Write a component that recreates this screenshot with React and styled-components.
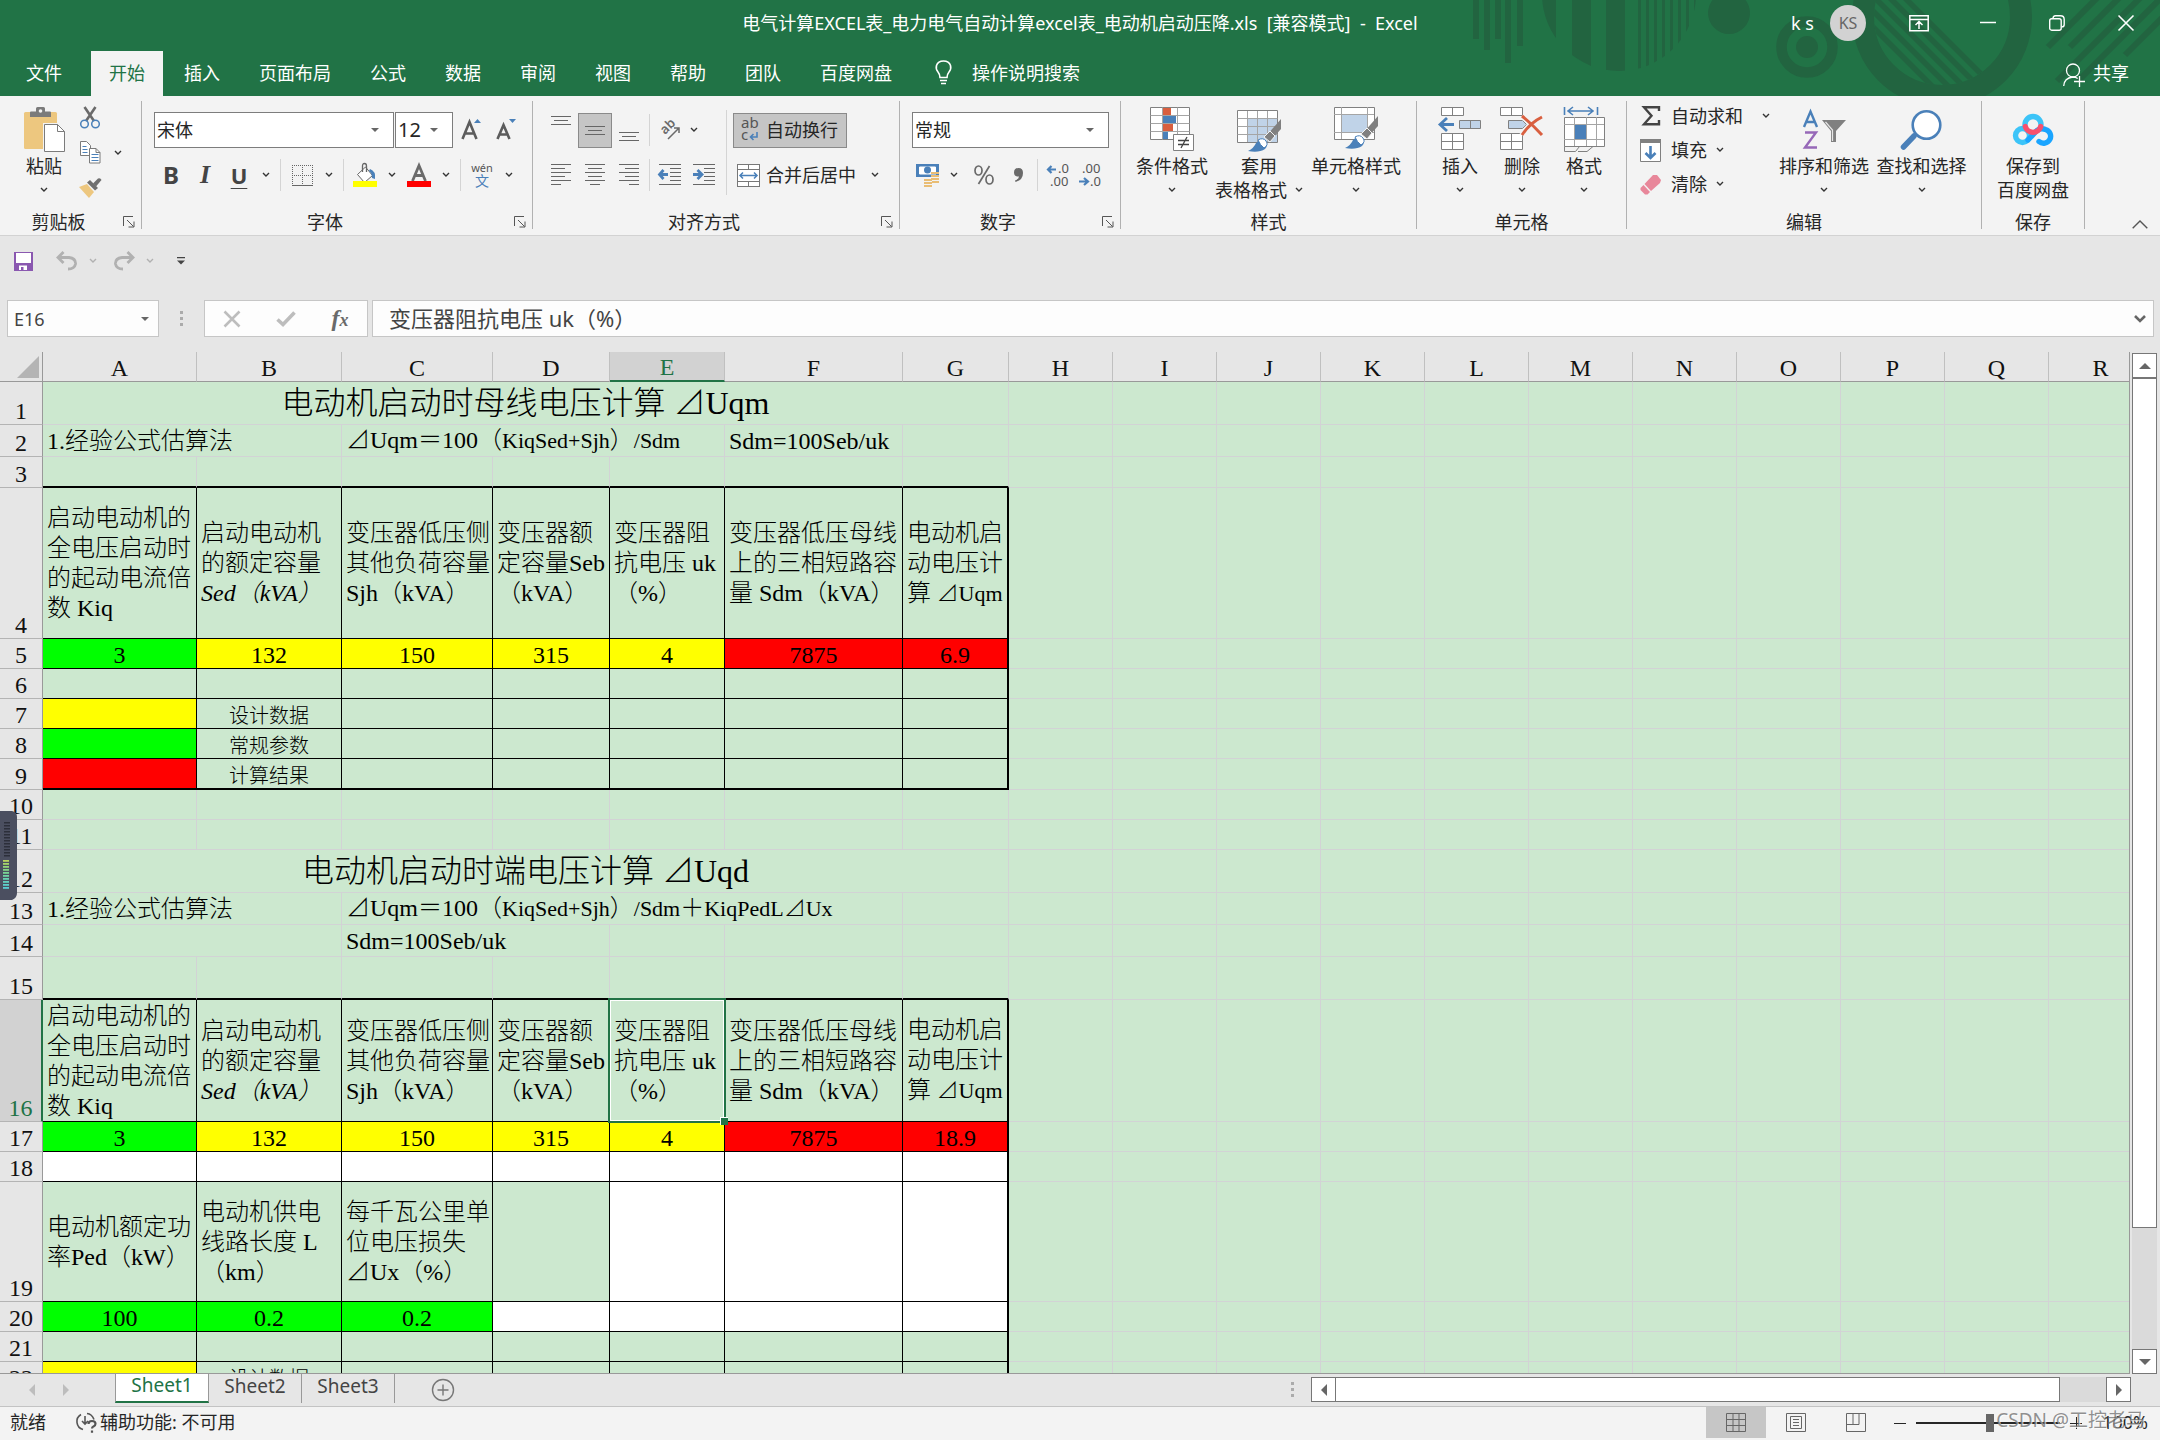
import React from "react";
import styled, { createGlobalStyle, css } from "styled-components";

const UI = `"Noto Sans", "Noto Sans CJK SC", sans-serif`;
const SONG = `"Liberation Serif", "Noto Sans CJK SC", serif`;
const GREEN = "#217346";
const PALE = "#cce8cf";
const YELLOW = "#ffff00";
const LIME = "#00ff00";
const RED = "#ff0000";
const WHITE = "#ffffff";
const BLUE = "#4a80b9";
const GREY = "#6a6a6a";

const Global = createGlobalStyle`
  *, *::before, *::after { box-sizing: border-box; }
  html, body { margin: 0; overflow: hidden; }
  body { font-family: ${UI}; font-size: 18px; line-height: 24px; color: #262626; background: #e6e6e6; }
  button, input, select { font: inherit; color: inherit; margin: 0; }
  svg { display: block; flex: none; overflow: visible; }
`;

const Window = styled.div`
  position: relative;
  display: flex;
  flex-direction: column;
  height: 100vh;
`;

/* ---------- title bar and tabs ---------- */

const Banner = styled.header`
  position: relative;
  flex: none;
  color: #fff;
  background: ${GREEN};
`;

const Pattern = styled.svg`
  position: absolute;
  top: 0;
  right: 0;
  overflow: hidden;
`;

const TitleRow = styled.div`
  position: relative;
  display: grid;
  grid-template-columns: 1fr auto 1fr;
  align-items: center;
  height: 51px;
  padding-bottom: 5px;
`;

const FileTitle = styled.h1`
  grid-column: 2;
  margin: 0;
  font-size: 18px;
  font-weight: 400;
  white-space: pre;
`;

const WindowTools = styled.div`
  display: flex;
  align-items: center;
  justify-content: flex-end;
`;

const Avatar = styled.span`
  width: 36px;
  height: 36px;
  margin: 0 18px 0 16px;
  border-radius: 50%;
  background: #d2d2d2;
  color: #666;
  font-size: 16px;
  line-height: 36px;
  text-align: center;
`;

const WindowButton = styled.button`
  display: flex;
  align-items: center;
  justify-content: center;
  width: 69px;
  height: 46px;
  padding: 0;
  border: 0;
  background: none;
`;

const TabRow = styled.nav`
  position: relative;
  display: flex;
  gap: 3px;
  height: 45px;
`;

const Tab = styled.button`
  display: flex;
  align-items: center;
  gap: 20px;
  padding: 0 ${(p) => p.$pad || 18}px 2px;
  border: 0;
  white-space: nowrap;
  background: ${(p) => (p.$active ? "#f3f3f3" : "none")};
  color: ${(p) => (p.$active ? GREEN : "#fff")};
`;

const ShareTab = styled(Tab)`
  gap: 8px;
  margin-left: auto;
  padding: 0 31px 2px 18px;
`;

/* ---------- ribbon ---------- */

const Ribbon = styled.section`
  display: flex;
  flex: none;
  height: 140px;
  background: #f3f3f3;
  border-bottom: 1px solid #d2d2d2;
`;

const GroupBox = styled.div`
  display: grid;
  grid-template-rows: 1fr 26px;
  flex: none;
  width: ${(p) => p.$w}px;
`;

const GroupBody = styled.div`
  display: flex;
  padding-left: ${(p) => p.$pad || 0}px;
`;

const GroupFooter = styled.div`
  display: grid;
  grid-template-columns: ${(p) => (p.$launcher ? "1fr 24px" : "1fr")};
  align-items: center;
  text-align: center;
`;

const Launcher = styled.button`
  display: flex;
  justify-content: center;
  padding: 0;
  border: 0;
  background: none;
`;

const Separator = styled.div`
  flex: none;
  width: 1px;
  margin: 5px 0 6px;
  background: #b1b1b1;
`;

const LongRule = styled.div`
  flex: none;
  width: 1px;
  height: 85px;
  margin: 14px 6px 0 5px;
  background: #d4d4d4;
`;

const Rule = styled.div`
  flex: none;
  width: 1px;
  height: 32px;
  margin: 0 ${(p) => p.$gap || 4}px;
  background: #d4d4d4;
`;

const Rows = styled.div`
  display: flex;
  flex-direction: column;
  gap: 9px;
  padding-top: 16px;
`;

const Line = styled.div`
  display: flex;
  align-items: center;
  gap: ${(p) => p.$gap || 0}px;
  height: 36px;
`;

const Tool = styled.button`
  display: flex;
  align-items: center;
  justify-content: center;
  flex: none;
  width: ${(p) => p.$w || 34}px;
  height: 35px;
  padding: 0;
  border: 1px solid ${(p) => (p.$on ? "#8a8a8a" : "transparent")};
  background: ${(p) => (p.$on ? "#c5c5c5" : "none")};
`;

const Glyph = styled.span`
  font-size: 24px;
  font-weight: 700;
  line-height: 28px;
  color: #444;
  ${(p) => p.$italic && css`font-family: "Liberation Serif", serif; font-style: italic; font-size: 26px;`}
  ${(p) => p.$under && css`font-size: 22px; text-decoration: underline; text-decoration-thickness: 1px; text-underline-offset: 4px;`}
`;

const LabelTool = styled.button`
  display: flex;
  align-items: center;
  gap: 6px;
  height: 35px;
  padding: 0 8px 0 3px;
  white-space: nowrap;
  border: 1px solid ${(p) => (p.$on ? "#8a8a8a" : "transparent")};
  background: ${(p) => (p.$on ? "#c5c5c5" : "none")};
`;

const SelectBox = styled.div`
  display: grid;
  grid-template-columns: 1fr 22px;
  align-items: center;
  width: ${(p) => p.$w}px;
  height: 36px;
  border: 1px solid #7d7d7d;
  background: #fff;
`;

const Select = styled.select`
  height: 34px;
  padding: 0 0 1px 2px;
  border: 0;
  background: none;
  appearance: none;
  min-width: 0;
  font-size: ${(p) => p.$size || 18}px;
`;

const Clip = styled.div`
  display: grid;
  grid-template-columns: 28px 20px;
  grid-auto-rows: 35px;
  align-content: start;
  align-items: center;
  padding-top: 4px;
`;

const BigBox = styled.button`
  display: flex;
  flex-direction: column;
  align-items: center;
  flex: none;
  width: ${(p) => p.$w}px;
  padding: 11px 0 0;
  border: 0;
  background: none;
  white-space: nowrap;
`;

const BigIcon = styled.span`
  display: flex;
  align-items: center;
  height: 45px;
  margin-bottom: 2px;
`;

const SecondLine = styled.span`
  display: flex;
  align-items: center;
  gap: 8px;
  height: 23px;
`;

const EditList = styled.div`
  width: 135px;
  padding-top: 4px;
`;

const EditItem = styled.button`
  display: grid;
  grid-template-columns: 22px auto auto;
  justify-content: start;
  align-items: center;
  column-gap: 9px;
  height: 34px;
  padding: 0 0 2px;
  border: 0;
  background: none;
  white-space: nowrap;
`;

const Push = styled.span`
  padding-left: ${(p) => p.$by || 0}px;
`;

const Collapse = styled.button`
  align-self: flex-end;
  margin-left: auto;
  padding: 6px 12px;
  border: 0;
  background: none;
`;

/* ---------- quick access and formula bar ---------- */

const QuickBar = styled.div`
  display: flex;
  align-items: center;
  flex: none;
  height: 50px;
  padding-left: 6px;
`;

const FormulaRow = styled.div`
  display: flex;
  flex: none;
  height: 66px;
  padding: 14px 6px 15px 7px;
`;

const Box = styled.div`
  display: flex;
  align-items: center;
  height: 37px;
  border: 1px solid #c6c6c6;
  background: #fdfdfd;
  ${(p) => (p.$w ? css`flex: none; width: ${p.$w}px;` : css`flex: 1;`)}
`;

const NameInput = styled.input`
  flex: 1;
  min-width: 0;
  height: 34px;
  padding: 0 6px;
  border: 0;
  outline: 0;
  background: none;
  font-size: 18px;
  color: #444;
`;

const FormulaInput = styled(NameInput)`
  padding: 0 16px 4px;
  font-size: 22px;
`;

const Grip = styled.div`
  display: flex;
  align-items: center;
  justify-content: center;
  flex: none;
  width: ${(p) => p.$w}px;
`;

/* ---------- sheet ---------- */

const Work = styled.main`
  display: flex;
  flex: 1;
  min-height: 0;
`;

const SheetView = styled.div`
  flex: 1;
  min-width: 0;
  overflow: hidden;
  background: ${PALE};
  border-right: 1px solid #999;
  border-bottom: 1px solid #999;
`;

const Grid = styled.table`
  width: 2153px;
  table-layout: fixed;
  border-collapse: separate;
  border-spacing: 0;
  font-family: ${SONG};
  font-size: 24px;
  font-weight: 300;
  line-height: 28px;
  color: #000;
`;

const ColHead = styled.th`
  height: 30px;
  padding: 3px 0 0;
  font-weight: 400;
  line-height: 25px;
  background: ${(p) => (p.$on ? "#d2d2d2" : "#e6e6e6")};
  color: ${(p) => (p.$on ? GREEN : "#111")};
  border-right: 1px solid #c0c0c0;
  border-bottom: ${(p) => (p.$on ? `2px solid ${GREEN}` : "1px solid #999")};
`;

const Corner = styled(ColHead)`
  padding: 0 3px 3px 0;
  border-right-color: #999;
  vertical-align: bottom;
  svg { margin-left: auto; }
`;

const RowHead = styled.th`
  padding: 0;
  font-weight: 400;
  line-height: 26px;
  vertical-align: bottom;
  text-align: center;
  background: ${(p) => (p.$on ? "#d2d2d2" : "#e6e6e6")};
  color: ${(p) => (p.$on ? GREEN : "#111")};
  border-right: ${(p) => (p.$on ? `2px solid ${GREEN}` : "1px solid #999")};
  border-bottom: 1px solid #b4b4b4;
`;

const Cell = styled.td`
  position: relative;
  height: ${(p) => p.$h}px;
  padding: 0 0 0 ${(p) => (p.$center ? 0 : 4)}px;
  white-space: pre;
  text-align: ${(p) => (p.$center ? "center" : "left")};
  vertical-align: ${(p) => (p.$low ? "bottom" : "middle")};
  font-size: ${(p) => p.$size || 24}px;
  line-height: ${(p) => p.$lh || 28}px;
  background: ${(p) => p.$fill || PALE};
  border-right: ${(p) => (p.$thickRight ? "2px solid #000" : p.$ink ? "1px solid #000" : "1px solid #d2d3d5")};
  border-bottom: ${(p) => (p.$thickBottom ? "2px solid #000" : p.$ink ? "1px solid #000" : "1px solid #d2d3d5")};
`;

const Small = styled.span`
  font-size: 22px;
`;

const Selection = styled.span`
  position: absolute;
  z-index: 1;
  inset: -2px;
  border: 2px solid ${GREEN};
  box-shadow: inset 0 0 0 1px #fff;
  &::after {
    content: "";
    position: absolute;
    right: -4px;
    bottom: -4px;
    width: 8px;
    height: 8px;
    background: ${GREEN};
    border: 1px solid #fff;
    border-width: 1px 0 0 1px;
  }
`;

const VScroll = styled.div`
  display: flex;
  flex-direction: column;
  flex: none;
  width: 25px;
  margin: 1px 3px 0 2px;
  background: #dadada;
`;

const ScrollButton = styled.button`
  display: flex;
  align-items: center;
  justify-content: center;
  flex: none;
  width: 25px;
  height: 25px;
  padding: 0;
  border: 1px solid #777;
  background: #fff;
`;

const VThumb = styled.div`
  height: 850px;
  border: 1px solid #777;
  background: #fff;
`;

const Spacer = styled.div`
  flex: 1;
`;

/* ---------- sheet tabs and status bar ---------- */

const SheetBar = styled.div`
  display: flex;
  flex: none;
  height: 33px;
  padding-right: 29px;
  border-bottom: 1px solid #c3c3c3;
`;

const SheetNav = styled.div`
  display: flex;
  align-items: center;
  width: 115px;
  padding-left: 15px;
`;

const SheetTab = styled.button`
  height: 29px;
  padding: 0 0 5px;
  width: ${(p) => (p.$active ? 94 : 93)}px;
  border: 0;
  font-size: 19px;
  line-height: 22px;
  color: ${(p) => (p.$active ? GREEN : "#444")};
  background: ${(p) => (p.$active ? "#fff" : "none")};
  ${(p) => (p.$active
    ? css`border-bottom: 2px solid ${GREEN}; border-left: 1px solid #999; border-right: 1px solid #999;`
    : css`border-right: 1px solid #999;`)}
`;

const AddSheet = styled.button`
  display: flex;
  align-items: center;
  padding: 0 0 0 36px;
  border: 0;
  background: none;
`;

const HScroll = styled.div`
  display: flex;
  flex: none;
  width: 820px;
  height: 25px;
  margin-top: 3px;
  background: #dadada;
`;

const HThumb = styled.div`
  flex: 1;
  margin-right: 46px;
  border: 1px solid #777;
  border-left: 0;
  background: #fff;
`;

const StatusBar = styled.footer`
  position: relative;
  display: flex;
  flex: none;
  align-items: stretch;
  height: 33px;
  padding-left: 10px;
  line-height: 30px;
  background: #f3f3f3;
`;

const Access = styled.span`
  display: flex;
  align-items: center;
  gap: 3px;
  height: 30px;
  margin: 0 auto 0 30px;
`;

const ViewButton = styled.button`
  display: flex;
  align-items: center;
  justify-content: center;
  width: 60px;
  height: 31px;
  padding: 0;
  border: 0;
  background: ${(p) => (p.$on ? "#c6c6c6" : "none")};
`;

const ZoomStep = styled.button`
  display: flex;
  align-items: center;
  width: 14px;
  height: 31px;
  padding: 0;
  border: 0;
  background: none;
`;

const Zoom = styled.input`
  width: 144px;
  height: 31px;
  margin: 0 10px 0 8px;
  appearance: none;
  background: linear-gradient(#262626, #262626) center / 100% 2px no-repeat;
  &::-webkit-slider-thumb {
    appearance: none;
    width: 8px;
    height: 18px;
    background: #666;
  }
`;

const Percent = styled.span`
  width: 76px;
  padding-right: 12px;
  text-align: right;
`;

const Watermark = styled.span`
  position: absolute;
  right: 15px;
  top: 0;
  font-size: 19px;
  line-height: 26px;
  color: rgba(110, 110, 110, 0.75);
  text-shadow: 1px 1px 0 rgba(255, 255, 255, 0.7);
`;

const Meter = styled.svg`
  position: absolute;
  left: 0;
  top: 811px;
`;

/* ---------- drawings ---------- */

const Chevron = ({ color = "#333" }) => (
  <svg width="8" height="6" viewBox="0 0 8 6" fill="none" stroke={color} strokeWidth="1.4"><path d="M1 1l3 3 3-3" /></svg>
);

const Triangle = ({ dir = "down", color = "#666", s = 8 }) => {
  const turn = { down: 0, left: 90, up: 180, right: 270 }[dir];
  return (
    <svg width={s} height={s} viewBox="0 0 8 8"><path d="M0 2h8L4 6z" fill={color} transform={`rotate(${turn} 4 4)`} /></svg>
  );
};

const Dots = () => (
  <svg width="3" height="16" viewBox="0 0 3 16" fill="#ababab"><path d="M0 0h3v3H0zM0 6h3v3H0zM0 12h3v3H0z" /></svg>
);

const HLines = ({ rows, w = 20, h = 22 }) => (
  <svg width={w} height={h} viewBox={`0 0 ${w} ${h}`} stroke="#666" shapeRendering="crispEdges">
    {rows.map(([y, a, b]) => <path key={y} d={`M${a} ${y + 0.5}H${b}`} />)}
  </svg>
);

const alignRows = (kind) => [0, 4, 8, 12, 16, 20].map((y, i) => {
  const short = i % 2 ? (i === 5 ? 10 : 14) : 20;
  const from = kind === "left" ? 0 : kind === "right" ? 20 - short : (20 - short) / 2;
  return [y, from, from + short];
});

const LauncherIcon = () => (
  <svg width="12" height="12" viewBox="0 0 12 12" fill="none" stroke="#555"><path d="M.5 10V.5H10M4 4l6.5 6.5M11 5.5V11H5.5" /></svg>
);

const PasteIcon = () => (
  <svg width="41" height="45" viewBox="0 0 41 45">
    <rect x="0" y="5" width="33" height="37" rx="1.5" fill="#edc77f" />
    <path d="M6 10V5.500q0-1 1-1h5V1.500Q12 0 13.500 0h6Q21 0 21 1.500v3h5q1 0 1 1V10z" fill="#7b7b7b" />
    <circle cx="16.500" cy="4" r="1.800" fill="#f3f3f3" />
    <path d="M19 16h15l8 8v21H19z" fill="#f3f3f3" />
    <path d="M20.500 17.500h13l7 7v20h-20z" fill="#fff" stroke="#7b7b7b" />
    <path d="M33.500 17.500v7h7" fill="none" stroke="#7b7b7b" />
  </svg>
);

const CutIcon = () => (
  <svg width="20" height="22" viewBox="0 0 20 22" fill="none">
    <path d="M4.500 0L14 14M15.500 0L6 14" stroke="#6a6a6a" strokeWidth="2.600" />
    <circle cx="4.500" cy="17" r="3.800" stroke={BLUE} strokeWidth="1.500" />
    <circle cx="15.500" cy="17" r="3.800" stroke={BLUE} strokeWidth="1.500" />
  </svg>
);

const CopyIcon = () => (
  <svg width="21" height="23" viewBox="0 0 21 23" fill="#fff" stroke="#7b7b7b">
    <path d="M.5.500h6l4 4v10H.500z" /><path d="M2.500 5.500h4M2.500 8.500h5M2.500 11.500h5" stroke={BLUE} />
    <path d="M9.500 7.500h6.500l4 4v10.500H9.500z" /><path d="M16 7.500v4h4" fill="none" /><path d="M11.500 13.500h7M11.500 16.500h7M11.500 19.500h7" stroke={BLUE} />
  </svg>
);

const PainterIcon = () => (
  <svg width="23" height="20" viewBox="0 0 23 20">
    <path d="M0 9l8-3 7 8-5 6z" fill="#edc77f" /><path d="M8 4.500l3-2.500 8 8-3 2.500z" fill="#6f6f6f" />
    <path d="M14 5.500l5-5q2.500-1 3.500 1.500L17 8.500z" fill="#6f6f6f" />
  </svg>
);

const GrowIcon = ({ down }) => (
  <svg width="20" height="22" viewBox="0 0 20 22">
    <path d={down ? "M1.500 20L7.500 6l6 14M3.800 15.500h7.500" : "M1.500 20L8.500 3l7 17M4 14.500h9"} fill="none" stroke="#5c5c5c" strokeWidth="2.600" />
    <path d={down ? "M13 0h7l-3.500 4z" : "M13 4h7l-3.500-4z"} fill={BLUE} />
  </svg>
);

const BorderIcon = () => (
  <svg width="21" height="21" viewBox="0 0 21 21" fill="none" stroke="#666" shapeRendering="crispEdges">
    <path d="M.5 0v20M10.500 0v20M20.500 0v20M0 .500h21M0 10.500h21" strokeDasharray="1 1" /><path d="M0 20.500h21" />
  </svg>
);

const FillIcon = () => (
  <svg width="24" height="24" viewBox="0 0 24 24">
    <path d="M4.500 11.500l8-7.500 7 8.500-8 7z" fill="#fff" stroke="#666" />
    <path d="M9.500 9V3q0-2.500 2-2.500t2 2.500v6" fill="none" stroke="#666" strokeWidth="1.300" />
    <path d="M17 6q6 2 5 10l-3-1q0-5-3-7z" fill={BLUE} />
    <rect y="18" width="24" height="6" fill="#ff0" />
  </svg>
);

const FontColorIcon = () => (
  <svg width="24" height="23" viewBox="0 0 24 23">
    <path d="M5.500 17L12 1.500 18.500 17M8 11.500h8" fill="none" stroke={GREY} strokeWidth="2.800" />
    <rect y="17" width="24" height="6" fill="red" />
  </svg>
);

const WenBox = styled.span`
  display: flex;
  flex-direction: column;
  align-items: center;
  font-size: 11px;
  line-height: 12px;
  color: #555;
  b { font-size: 14px; line-height: 14px; font-weight: 400; color: ${BLUE}; }
`;

const OrientIcon = () => (
  <svg width="22" height="22" viewBox="0 0 22 22">
    <text x="0" y="0" transform="translate(6 16) rotate(-45)" fontSize="13" fontFamily="Noto Sans, sans-serif" fontWeight="600" fill={GREY}>ab</text>
    <path d="M9 20L20 9M15 9h5v5" fill="none" stroke={GREY} strokeWidth="1.500" />
  </svg>
);

const IndentIcon = ({ right }) => (
  <svg width="22" height="22" viewBox="0 0 22 22" fill="none">
    <path d="M0 .500h22M11 4.500h11M11 8.500h11M11 12.500h11M11 16.500h11M0 20.500h22" stroke="#666" shapeRendering="crispEdges" />
    <path d={right ? "M0 10.500h8M4.500 6l4.500 4.500L4.500 15" : "M9 10.500H1M4.500 6L0.500 10.500 4.500 15"} stroke={BLUE} strokeWidth="2.800" />
  </svg>
);

const WrapIcon = () => (
  <svg width="23" height="24" viewBox="0 0 23 24" fontFamily="Noto Sans, sans-serif" fontSize="15" fill="#555">
    <text x="4" y="10">ab</text><text x="4" y="22">c</text>
    <path d="M20 14v5h-6M16.500 16l-3 3 3 3" fill="none" stroke={BLUE} strokeWidth="1.600" />
  </svg>
);

const MergeIcon = () => (
  <svg width="23" height="23" viewBox="0 0 23 23" fill="none">
    <path d="M.5.500h22v22H.500zM.500 5.500h22M.500 17.500h22M11.500 0v5M11.500 18v5" fill="#fff" stroke="#777" shapeRendering="crispEdges" />
    <path d="M3 11.500h17M6 8.500l-3 3 3 3M17 8.500l3 3-3 3" stroke={BLUE} strokeWidth="1.500" />
  </svg>
);

const MoneyIcon = () => (
  <svg width="24" height="23" viewBox="0 0 24 23">
    <rect width="23" height="13" fill={BLUE} /><path d="M3 2.500h17v8H3z" fill="#fff" /><path d="M1 1h4L1 5zM22 1v4l-4-4zM1 12V8l4 4z" fill={BLUE} /><circle cx="11.500" cy="6" r="3.500" fill={BLUE} />
    <g stroke="#e9bd74" strokeWidth="2"><path d="M15 9h8M15 12h8M15 15h8M8 16h8M8 19h8M8 22h8M16 18h7" /></g>
  </svg>
);

const DecimalIcon = ({ less }) => (
  <svg width="24" height="26" viewBox="0 0 24 26" fontFamily="Noto Sans, sans-serif" fontSize="13" fill="#555">
    <text x={less ? 3 : 11} y="11">{less ? ".00" : ".0"}</text>
    <text x={less ? 11 : 3} y="24">{less ? ".0" : ".00"}</text>
    <path d={less ? "M0 19.500h8M5 16l4 3.500L5 23" : "M9 7.500H1M4.500 4L1 7.500 4.500 11"} fill="none" stroke={BLUE} strokeWidth="2.200" />
  </svg>
);

const Brush = ({ x, y }) => (
  <g transform={`translate(${x} ${y})`}>
    <path d="M33 0v10L24 20l-5-4z" fill="#808080" /><path d="M22 12l5 5-5 6-6-5z" fill="#808080" stroke="#f3f3f3" />
    <path d="M0 32q6-3 8-8 4-5 9-2 4 4 0 8-6 4-17 2z" fill={BLUE} /><path d="M10 21q5-3 8 1t-2 7q-4-3-6-8z" fill="#fff" stroke={BLUE} />
  </g>
);

const CondIcon = () => (
  <svg width="45" height="45" viewBox="0 0 45 45">
    <path d="M.5.500h39v32H.500z" fill="#fff" stroke="#808080" />
    <path d="M.5 8.500h39M.5 16.500h39M.5 24.500h39M12.500.500v32M27.500.500v32" stroke="#a5a5a5" fill="none" />
    <path d="M13 1h8v7h-8zM13 17h10v7H13z" fill="#d95f3f" /><path d="M13 9h13v7H13zM13 25h5v7h-5z" fill={BLUE} />
    <path d="M23.500 27.500h20v16h-20z" fill="#fff" stroke="#808080" /><path d="M28 33.500h11M28 37.500h11M37 30l-6 11" stroke="#444" fill="none" strokeWidth="1.300" />
  </svg>
);

const TableIcon = () => (
  <svg width="45" height="45" viewBox="0 0 45 45">
    <path d="M.5 3.500h40v32H.500z" fill="#fff" stroke="#808080" /><path d="M11 12h29v23H11z" fill="#c0d3e8" />
    <path d="M.5 11.500h40M.5 19.500h40M.5 27.500h40M10.500 4v31M20.500 4v31M30.500 4v31" stroke="#a5a5a5" fill="none" />
    <Brush x={11} y={12} />
  </svg>
);

const StyleIcon = () => (
  <svg width="45" height="45" viewBox="0 0 45 45">
    <path d="M.5.500h40v32H.500z" fill="#fff" stroke="#808080" /><path d="M0 7.500h40M0 25.500h40M7.500 0v32M33.500 0v32" stroke="#a5a5a5" />
    <path d="M8 8h25v17H8z" fill="#c0d3e8" /><Brush x={11} y={9} />
  </svg>
);

const InsertIcon = () => (
  <svg width="44" height="45" viewBox="0 0 44 45" fill="none" stroke="#808080">
    <path d="M3.500.500h22v8h-22zM14.500.500v8M3.500 26.500h22v16h-22zM14.500 26.500v16M3.500 34.500h22" fill="#fff" />
    <path d="M21.500 13.500h21v8h-21z" fill="#c0d3e8" /><path d="M32.500 13.500v8" />
    <path d="M16 17.500H2M9 11l-7 6.500L9 24" stroke={BLUE} strokeWidth="2.800" />
  </svg>
);

const DeleteIcon = () => (
  <svg width="44" height="45" viewBox="0 0 44 45" fill="none" stroke="#808080">
    <path d="M.5.500h22v8H.500zM11.500.500v8M.500 26.500h22v16H.500zM11.500 26.500v16M.500 34.500h22" fill="#fff" />
    <path d="M8.500 13.500h14l4 4-4 4h-14z" fill="#c0d3e8" />
    <path d="M22 9q10 8 20 19M42 10q-12 6-20 18" stroke="#f3f3f3" strokeWidth="6" />
    <path d="M22 9q10 8 20 19M42 10q-12 6-20 18" stroke="#d95f3f" strokeWidth="3" />
  </svg>
);

const FormatIcon = () => (
  <svg width="41" height="45" viewBox="0 0 41 45" fill="none">
    <path d="M.5 0v8M33.500 0v8M4 4h25M9 0L4 4l5 4M24 0l5 4-5 4" stroke={BLUE} strokeWidth="1.600" />
    <path d="M.5 10.500h40v29H.500z" fill="#fff" stroke="#808080" /><path d="M0 17.500h40M0 32.500h40M10.500 10v29M22.500 10v29M32.500 10v29" stroke="#a5a5a5" />
    <path d="M11 18h11v14H11z" fill={BLUE} /><path d="M.5 39.500v5h11l4-5M14 44.500h9l6-5" stroke="#808080" />
  </svg>
);

const SigmaIcon = () => (
  <svg width="20" height="20" viewBox="0 0 20 20"><path d="M19 5V1.300H4L11.500 9.700 4 18.200h15V14" fill="none" stroke="#444" strokeWidth="2.400" /></svg>
);

const FillDownIcon = () => (
  <svg width="21" height="23" viewBox="0 0 21 23"><path d="M.5.500h20v22H.500z" fill="#fff" stroke="#808080" /><path d="M0 0h21v4H0z" fill="#808080" /><path d="M10.500 7v12M5.500 14l5 5 5-5" fill="none" stroke={BLUE} strokeWidth="2.600" /></svg>
);

const EraserIcon = () => (
  <svg width="21" height="21" viewBox="0 0 21 21"><path d="M13 1h4l4 5-1 3-9 8-6.500-7z" fill="#e8879a" /><path d="M3.500 11l6.500 7L7.500 20.500H5L.500 16v-2z" fill="#e8879a" /></svg>
);

const SortIcon = () => (
  <svg width="43" height="40" viewBox="0 0 43 40" fill="none">
    <path d="M1 17L7.500 1.500 14 17M3.500 12h8" stroke={BLUE} strokeWidth="2.400" />
    <path d="M2 22.500h11L2 37.500h12" stroke="#9668b8" strokeWidth="2.400" />
    <path d="M19 10h24L33 21v11h-5V21z" fill="#808080" /><path d="M22.500 12l7 8v11" stroke="#e6e6e6" strokeWidth="1.200" />
  </svg>
);

const FindIcon = () => (
  <svg width="41" height="40" viewBox="0 0 41 40"><path d="M13 26L2.500 37" stroke={BLUE} strokeWidth="5.500" strokeLinecap="round" /><circle cx="25.500" cy="15" r="13.800" fill="#fff" stroke={BLUE} strokeWidth="2.600" /></svg>
);

const PanIcon = () => (
  <svg width="40" height="32" viewBox="0 0 40 32" fill="none" strokeWidth="5.400" strokeLinecap="round">
    <circle cx="9.500" cy="21.500" r="7" stroke="#3cc4f8" />
    <path d="M15 26l9-9.500q4-3 8.500-1a7 7 0 1 1-6.500 12" stroke="#1aa5ff" />
    <path d="M12 10.500a8 8 0 0 1 16 0" stroke="#3cc4f8" />
    <path d="M12.300 12.500a8 8 0 0 0 15.400 0" stroke="#f9506e" />
  </svg>
);

const BannerPattern = () => (
  <Pattern width="700" height="96" viewBox="1460 0 700 96" fill="#226440">
    <defs>
      <clipPath id="bars"><circle cx="1619" cy="-6" r="77" /></clipPath>
      <clipPath id="disc"><circle cx="1942" cy="17" r="68" /></clipPath>
    </defs>
    <path d="M1473 0h6v39h-6zM1484 0h6v50h-6zM1495 0h6v39h-6zM1505 0h6v63h-6zM1517 0h6v46h-6z" />
    <g clipPath="url(#bars)">
      <path d="M1540 0h16v80h-16zM1572 0h19v80h-19zM1606 0h19v80h-19z" />
      {[1638, 1646, 1654, 1662, 1670, 1678, 1686, 1694].map((x) => <path key={x} d={`M${x} 0h3v80h-3z`} />)}
    </g>
    <circle cx="1729" cy="13" r="21" />
    <circle cx="1807" cy="47" r="11" />
    <g fill="none" stroke="#226440">
      <circle cx="1807" cy="47" r="25.500" strokeWidth="10.500" />
      <circle cx="1942" cy="17" r="79" strokeWidth="22" />
      <path clipPath="url(#disc)" strokeWidth="5.500" d="M1841 -5l110 110M1857 -5l110 110M1872 -5l110 110M1887 -5l110 110M1902 -5l110 110" />
      <path strokeWidth="6" d="M2100 -5l-52 52M2122 -5l-52 52M2143 -5l-86 86M2164 -5l-86 86M2185 -5l-60 60" />
    </g>
  </Pattern>
);

const BulbIcon = () => (
  <svg width="17" height="25" viewBox="0 0 17 25" fill="none" stroke="#fff" strokeWidth="1.600">
    <path d="M5 17.500q0-3-2-5.500-2.500-3-1.500-6.500Q3 1 8.500 1T15.500 5.500q1 3.500-1.500 6.500-2 2.500-2 5.500zM5 20.500h7M6 23.500h5" />
  </svg>
);

const ShareIcon = () => (
  <svg width="22" height="24" viewBox="0 -2 22 24" fill="none" stroke="#fff" strokeWidth="1.300"><circle cx="10" cy="7.500" r="6.500" /><path d="M.7 23q.5-8 9-9 3 0 5 1.500M16.500 13v11M11 18.500h11" /></svg>
);

const RibbonModeIcon = () => (
  <svg width="20" height="17" viewBox="0 0 20 17" fill="none" stroke="#fff" strokeWidth="1.500"><path d="M.8.800h18.400v15H.800zM.8 4.500h18.400M10 14V7M6.500 10L10 6.500l3.500 3.500" /></svg>
);
const MinIcon = () => <svg width="16" height="16" viewBox="0 0 16 16" stroke="#fff" strokeWidth="1.500"><path d="M0 7.500h16" /></svg>;
const RestoreIcon = () => (
  <svg width="16" height="16" viewBox="0 0 16 16" fill="none" stroke="#fff" strokeWidth="1.400"><rect x=".7" y="3.700" width="11.500" height="11.500" rx="2" /><path d="M4 3.500q0-2.800 2.500-2.800h5q3.700 0 3.700 3.700v5q0 2.500-2.500 2.500" /></svg>
);
const CloseIcon = () => <svg width="16" height="16" viewBox="0 0 16 16" stroke="#fff" strokeWidth="1.600"><path d="M.5.500l15 15M15.500.500l-15 15" /></svg>;

const SaveIcon = () => (
  <svg width="19" height="19" viewBox="0 0 19 19"><path d="M0 0h19v19H0z" fill="#8a58b0" /><path d="M2 1h15v10H2z" fill="#fff" /><path d="M5 13.500h8V18H5z" fill="#fff" /><path d="M7 15h2.500v3H7z" fill="#8a58b0" /></svg>
);
const UndoIcon = ({ flip }) => (
  <svg width="22" height="20" viewBox="0 0 22 20" fill="none" stroke="#b1b1b1" strokeWidth="2.800">
    <g transform={flip ? "translate(22 0) scale(-1 1)" : undefined}><path d="M2 6.500h11q7 1 6.500 6.500-1 5-7.500 5M7.500 1L2 6.500 7.500 12" /></g>
  </svg>
);
const MoreIcon = () => <svg width="8" height="8" viewBox="0 0 8 8" fill="#444"><path d="M0 0h8v1.300H0zM0 3.500h8L4 7.500z" /></svg>;
const CrossIcon = () => <svg width="18" height="16" viewBox="0 0 18 16" stroke="#bdbdbd" strokeWidth="2.600"><path d="M1.500.500l15 15M16.500.500l-15 15" /></svg>;
const TickIcon = () => <svg width="20" height="16" viewBox="0 0 20 16" fill="none" stroke="#bdbdbd" strokeWidth="3.600"><path d="M1.500 8.500l5.500 5L18.500 1.500" /></svg>;

const Fx = styled.i`
  font-family: "Liberation Serif", serif;
  font-size: 24px;
  font-weight: 700;
  color: #6a6a6a;
  small { font-size: 18px; }
`;

const AccessIcon = () => (
  <svg width="21" height="21" viewBox="0 0 21 21" fill="none" stroke="#555" strokeWidth="1.600">
    <path d="M5 2.500A8.200 8.200 0 0 0 7 17.500M11 1.500q5 .500 7 6M9 4v8M6 9l3 3 3-3" /><path d="M12.500 12q0-3 3.500-3t3.500 2.800q0 1.700-2 2.600-1.500.800-1.500 2.200M16 18.500v2.200" strokeWidth="2.200" />
  </svg>
);

const ViewIcon = ({ d }) => (
  <svg width="20" height="19" viewBox="0 0 20 19" fill="none" stroke="#666"><path d={d} /></svg>
);

/* ---------- composed parts ---------- */

const Group = ({ w, title, pad, launcher, children }) => (
  <>
    <GroupBox $w={w}>
      <GroupBody $pad={pad}>{children}</GroupBody>
      <GroupFooter $launcher={launcher}>
        <span>{title}</span>
        {launcher && <Launcher aria-label={title}><LauncherIcon /></Launcher>}
      </GroupFooter>
    </GroupBox>
    <Separator />
  </>
);

const Big = ({ w, icon, label, second, drop = true }) => (
  <BigBox $w={w}>
    <BigIcon>{icon}</BigIcon>
    <span>{label}</span>
    <SecondLine>{second}{drop && <Chevron />}</SecondLine>
  </BigBox>
);

const Drop = ({ w = 20, label }) => <Tool $w={w} aria-label={label}><Chevron /></Tool>;

const Pick = ({ w, value, label, size }) => (
  <SelectBox $w={w}>
    <Select aria-label={label} defaultValue={value} $size={size}><option>{value}</option></Select>
    <Triangle />
  </SelectBox>
);

const COLS = [
  ["A", 154], ["B", 145], ["C", 151], ["D", 117], ["E", 115], ["F", 178], ["G", 106],
  ..."HIJKLMNOPQR".split("").map((c) => [c, 104]),
];

const num = (t, fill) => ({ t, fill, center: true, low: true, lh: 26 });
const head = (t, more) => ({ t, lh: 30, ...more });
const blank = (n, fill) => Array.from({ length: n }, () => ({ t: "", fill }));
const legend = (fill, t) => [{ t: "", fill }, { t, center: true, low: true, size: 20, lh: 24 }, ...blank(5)];

const HEADINGS = (selected) => [
  head("启动电动机的\n全电压启动时\n的起动电流倍\n数 Kiq"),
  head(<>启动电动机{"\n"}的额定容量{"\n"}<i>Sed（kVA）</i></>),
  head("变压器低压侧\n其他负荷容量\nSjh（kVA）"),
  head("变压器额\n定容量Seb\n（kVA）"),
  head(<>变压器阻{"\n"}抗电压 uk{"\n"}（%）{selected && <Selection />}</>),
  head("变压器低压母线\n上的三相短路容\n量 Sdm（kVA）"),
  head(<>电动机启{"\n"}动电压计{"\n"}算<Small> ⊿Uqm</Small></>),
];

const values = (last) => [
  num("3", LIME), num("132", YELLOW), num("150", YELLOW), num("315", YELLOW), num("4", YELLOW), num("7875", RED), num(last, RED),
];

const FORMULA = <>⊿Uqm＝100（<Small>KiqSed+Sjh</Small>）<Small>/Sdm</Small></>;

const ROWS = [
  { h: 43, cells: [{ t: "电动机启动时母线电压计算 ⊿Uqm", span: 7, center: true, size: 32, lh: 40 }] },
  { h: 32, cells: [{ t: "1.经验公式估算法", span: 2 }, { t: FORMULA, span: 3 }, { t: "Sdm=100Seb/uk" }, { t: "" }] },
  { h: 31, thick: true, cells: blank(7) },
  { h: 151, ink: true, cells: HEADINGS(false) },
  { h: 30, ink: true, cells: values("6.9") },
  { h: 30, ink: true, cells: blank(7) },
  { h: 30, ink: true, cells: legend(YELLOW, "设计数据") },
  { h: 30, ink: true, cells: legend(LIME, "常规参数") },
  { h: 31, ink: true, thick: true, cells: legend(RED, "计算结果") },
  { h: 30, cells: blank(7) },
  { h: 30, cells: blank(7) },
  { h: 43, cells: [{ t: "电动机启动时端电压计算 ⊿Uqd", span: 7, center: true, size: 32, lh: 40 }] },
  { h: 32, cells: [{ t: "1.经验公式估算法", span: 2 }, { t: <>{FORMULA}＋<Small>KiqPedL⊿Ux</Small></>, span: 4 }, { t: "" }] },
  { h: 32, cells: [{ t: "", span: 2 }, { t: "Sdm=100Seb/uk", span: 2 }, ...blank(3)] },
  { h: 43, thick: true, cells: blank(7) },
  { h: 122, ink: true, on: true, cells: HEADINGS(true) },
  { h: 30, ink: true, cells: values("18.9") },
  { h: 30, ink: true, cells: blank(7, WHITE) },
  {
    h: 120, ink: true, cells: [
      head("电动机额定功\n率Ped（kW）"), head("电动机供电\n线路长度 L\n（km）"), head("每千瓦公里单\n位电压损失\n⊿Ux（%）"),
      { t: "" }, ...blank(3, WHITE),
    ],
  },
  { h: 30, ink: true, cells: [num("100", LIME), num("0.2", LIME), num("0.2", LIME), ...blank(4, WHITE)] },
  { h: 30, ink: true, cells: blank(7) },
  { h: 30, ink: true, cells: legend(YELLOW, "设计数据") },
];

const Sheet = () => (
  <Grid>
    <colgroup>
      <col style={{ width: 43 }} />
      {COLS.map(([c, w]) => <col key={c} style={{ width: w }} />)}
    </colgroup>
    <thead>
      <tr>
        <Corner aria-label="全选"><svg width="22" height="22" viewBox="0 0 22 22"><path d="M22 0v22H0z" fill="#b4b4b4" /></svg></Corner>
        {COLS.map(([c]) => <ColHead key={c} scope="col" $on={c === "E"}>{c}</ColHead>)}
      </tr>
    </thead>
    <tbody>
      {ROWS.map((r, i) => (
        <tr key={i}>
          <RowHead scope="row" $on={r.on}>{i + 1}</RowHead>
          {r.cells.map((c, j) => (
            <Cell
              key={j} colSpan={c.span} $h={r.h} $ink={r.ink} $thickBottom={r.thick}
              $thickRight={r.ink && j === r.cells.length - 1}
              $fill={c.fill} $center={c.center} $low={c.low} $size={c.size} $lh={c.lh}
            >
              {c.t}
            </Cell>
          ))}
          {COLS.slice(7).map(([c]) => <Cell key={c} $h={r.h} />)}
        </tr>
      ))}
    </tbody>
  </Grid>
);

const TABS = ["插入", "页面布局", "公式", "数据", "审阅", "视图", "帮助", "团队", "百度网盘"];

export default function App() {
  return (
    <Window>
      <Global />
      <Banner>
        <BannerPattern />
        <TitleRow>
          <FileTitle>{"电气计算EXCEL表_电力电气自动计算excel表_电动机启动压降.xls  [兼容模式]  -  Excel"}</FileTitle>
          <WindowTools>
            <span>k s</span>
            <Avatar>KS</Avatar>
            <WindowButton aria-label="功能区显示选项"><RibbonModeIcon /></WindowButton>
            <WindowButton aria-label="最小化"><MinIcon /></WindowButton>
            <WindowButton aria-label="向下还原"><RestoreIcon /></WindowButton>
            <WindowButton aria-label="关闭"><CloseIcon /></WindowButton>
          </WindowTools>
        </TitleRow>
        <TabRow>
          <Tab $pad={26}>文件</Tab>
          <Tab $active>开始</Tab>
          {TABS.map((t) => <Tab key={t}>{t}</Tab>)}
          <Tab $pad={22}><BulbIcon />操作说明搜索</Tab>
          <ShareTab><ShareIcon />共享</ShareTab>
        </TabRow>
      </Banner>

      <Ribbon>
        <Group w={141} title="剪贴板" pad={8} launcher>
          <Big w={72} icon={<PasteIcon />} label="粘贴" />
          <Clip>
            <Tool $w={20} aria-label="剪切"><CutIcon /></Tool><span />
            <Tool $w={20} aria-label="复制"><CopyIcon /></Tool><Drop label="复制选项" />
            <Tool $w={20} aria-label="格式刷"><PainterIcon /></Tool>
          </Clip>
        </Group>
        <Group w={390} title="字体" pad={12} launcher>
          <Rows>
            <Line $gap={1}>
              <Pick w={240} value="宋体" label="字体" />
              <Pick w={58} value="12" label="字号" size={20} />
              <Tool aria-label="增大字号"><GrowIcon /></Tool>
              <Tool aria-label="减小字号"><GrowIcon down /></Tool>
            </Line>
            <Line>
              <Tool aria-label="加粗"><Glyph>B</Glyph></Tool>
              <Tool aria-label="倾斜"><Glyph $italic>I</Glyph></Tool>
              <Tool aria-label="下划线"><Glyph $under>U</Glyph></Tool>
              <Drop label="下划线样式" />
              <Rule />
              <Tool aria-label="边框"><BorderIcon /></Tool><Drop label="边框样式" />
              <Rule />
              <Tool aria-label="填充颜色"><FillIcon /></Tool><Drop label="填充颜色选项" />
              <Tool aria-label="字体颜色"><FontColorIcon /></Tool><Drop label="字体颜色选项" />
              <Rule />
              <Tool aria-label="拼音"><WenBox>wén<b>文</b></WenBox></Tool><Drop label="拼音选项" />
            </Line>
          </Rows>
        </Group>
        <Group w={366} title="对齐方式" pad={11} launcher>
          <Rows>
            <Line>
              <Tool aria-label="顶端对齐"><HLines rows={[[1, 0, 20], [5, 3, 17], [9, 0, 20]]} h={30} /></Tool>
              <Tool $on aria-label="垂直居中"><HLines rows={[[7, 0, 20], [11, 3, 17], [15, 0, 20]]} /></Tool>
              <Tool aria-label="底端对齐"><HLines rows={[[17, 0, 20], [21, 3, 17], [25, 0, 20]]} h={30} /></Tool>
              <Rule $gap={3} />
              <Tool aria-label="方向"><OrientIcon /></Tool><Drop w={14} label="方向选项" />
            </Line>
            <Line>
              <Tool aria-label="左对齐"><HLines rows={alignRows("left")} /></Tool>
              <Tool aria-label="居中"><HLines rows={alignRows("center")} /></Tool>
              <Tool aria-label="右对齐"><HLines rows={alignRows("right")} /></Tool>
              <Rule $gap={3} />
              <Tool aria-label="减少缩进量"><IndentIcon /></Tool>
              <Tool aria-label="增加缩进量"><IndentIcon right /></Tool>
            </Line>
          </Rows>
          <LongRule />
          <Rows>
            <Line><LabelTool $on><WrapIcon />自动换行</LabelTool></Line>
            <Line><LabelTool><MergeIcon />合并后居中</LabelTool><Drop label="合并选项" /></Line>
          </Rows>
        </Group>
        <Group w={220} title="数字" pad={12} launcher>
          <Rows>
            <Line><Pick w={197} value="常规" label="数字格式" /></Line>
            <Line>
              <Tool $w={32} aria-label="会计数字格式"><MoneyIcon /></Tool><Drop label="货币选项" />
              <Tool $w={40} aria-label="百分比样式">
                <svg width="20" height="20" viewBox="0 0 20 20" fill="none" stroke={GREY} strokeWidth="1.700"><ellipse cx="4.500" cy="5.500" rx="3.500" ry="4.500" /><ellipse cx="15.500" cy="14.500" rx="3.500" ry="4.500" /><path d="M15.500 1L4.500 19" /></svg>
              </Tool>
              <Tool $w={28} aria-label="千位分隔样式">
                <svg width="9" height="14" viewBox="0 0 9 14" fill={GREY}><path d="M4.500 0Q9 0 9 5q0 7-7.500 9l-.500-1.500Q5 11 5 8.500 0 9 0 4.500 0 0 4.500 0z" /></svg>
              </Tool>
              <Rule $gap={5} />
              <Tool $w={32} aria-label="增加小数位数"><DecimalIcon /></Tool>
              <Tool $w={32} aria-label="减少小数位数"><DecimalIcon less /></Tool>
            </Line>
          </Rows>
        </Group>
        <Group w={295} title="样式" pad={9}>
          <Big w={84} icon={<CondIcon />} label="条件格式" />
          <Big w={90} icon={<TableIcon />} label="套用" second="表格格式" />
          <Big w={104} icon={<StyleIcon />} label="单元格样式" />
        </Group>
        <Group w={209} title="单元格" pad={12}>
          <Big w={62} icon={<InsertIcon />} label="插入" />
          <Big w={62} icon={<DeleteIcon />} label="删除" />
          <Big w={62} icon={<FormatIcon />} label="格式" />
        </Group>
        <Group w={354} title="编辑" pad={13}>
          <EditList>
            <EditItem><SigmaIcon />自动求和<Push $by={10}><Chevron /></Push></EditItem>
            <EditItem><FillDownIcon />填充<Chevron /></EditItem>
            <EditItem><EraserIcon />清除<Chevron /></EditItem>
          </EditList>
          <Big w={98} icon={<SortIcon />} label="排序和筛选" />
          <Big w={97} icon={<FindIcon />} label="查找和选择" />
        </Group>
        <Group w={102} title="保存">
          <Big w={102} icon={<PanIcon />} label="保存到" second="百度网盘" drop={false} />
        </Group>
        <Collapse aria-label="折叠功能区">
          <svg width="16" height="9" viewBox="0 0 16 9" fill="none" stroke="#555" strokeWidth="1.400"><path d="M.7 8.300L8 1l7.300 7.300" /></svg>
        </Collapse>
      </Ribbon>

      <QuickBar>
        <Tool aria-label="保存"><SaveIcon /></Tool>
        <Push $by={5} />
        <Tool $w={44} aria-label="撤消"><UndoIcon /></Tool>
        <Tool $w={8} aria-label="撤消历史"><Chevron color="#b1b1b1" /></Tool>
        <Push $by={5} />
        <Tool $w={44} aria-label="恢复"><UndoIcon flip /></Tool>
        <Tool $w={8} aria-label="恢复历史"><Chevron color="#b1b1b1" /></Tool>
        <Tool $w={54} aria-label="自定义快速访问工具栏"><MoreIcon /></Tool>
      </QuickBar>

      <FormulaRow>
        <Box $w={152}>
          <NameInput aria-label="名称框" defaultValue="E16" />
          <Tool $w={26} aria-label="名称列表"><Triangle /></Tool>
        </Box>
        <Grip $w={45}><Dots /></Grip>
        <Box $w={164}>
          <Tool $w={54} aria-label="取消"><CrossIcon /></Tool>
          <Tool $w={54} aria-label="输入"><TickIcon /></Tool>
          <Tool $w={54} aria-label="插入函数"><Fx>f<small>x</small></Fx></Tool>
        </Box>
        <Grip $w={4} />
        <Box>
          <FormulaInput aria-label="编辑栏" defaultValue="变压器阻抗电压 uk（%）" />
          <Tool $w={26} aria-label="展开编辑栏">
            <svg width="12" height="8" viewBox="0 0 12 8" fill="none" stroke="#666" strokeWidth="2.600"><path d="M1 1l5 5 5-5" /></svg>
          </Tool>
        </Box>
      </FormulaRow>

      <Work>
        <SheetView><Sheet /></SheetView>
        <VScroll>
          <ScrollButton aria-label="向上滚动"><Triangle dir="up" s={12} /></ScrollButton>
          <VThumb />
          <Spacer />
          <ScrollButton aria-label="向下滚动"><Triangle s={12} /></ScrollButton>
        </VScroll>
      </Work>

      <SheetBar>
        <SheetNav>
          <Tool aria-label="上一张"><Triangle dir="left" color="#bdbdbd" s={12} /></Tool>
          <Tool aria-label="下一张"><Triangle dir="right" color="#bdbdbd" s={12} /></Tool>
        </SheetNav>
        <SheetTab $active>Sheet1</SheetTab>
        <SheetTab>Sheet2</SheetTab>
        <SheetTab>Sheet3</SheetTab>
        <AddSheet aria-label="新工作表">
          <svg width="24" height="24" viewBox="0 0 24 24" fill="none" stroke="#777" strokeWidth="1.400"><circle cx="12" cy="12" r="10.500" /><path d="M12 6.500v11M6.500 12h11" /></svg>
        </AddSheet>
        <Spacer />
        <Grip $w={38}><Dots /></Grip>
        <HScroll>
          <ScrollButton aria-label="向左滚动"><Triangle dir="left" s={12} /></ScrollButton>
          <HThumb />
          <ScrollButton aria-label="向右滚动"><Triangle dir="right" s={12} /></ScrollButton>
        </HScroll>
      </SheetBar>

      <StatusBar>
        <span>就绪</span>
        <Access><AccessIcon />辅助功能: 不可用</Access>
        <ViewButton $on aria-label="普通"><ViewIcon d="M.5.500h19v18H.500zM7 0v19M13 0v19M0 6.500h20M0 12.500h20" /></ViewButton>
        <ViewButton aria-label="页面布局"><ViewIcon d="M.5.500h19v18H.500zM4.500 3.500h11v12h-11zM7 6.500h6M7 9.500h6M7 12.500h6" /></ViewButton>
        <ViewButton aria-label="分页预览"><ViewIcon d="M.5.500h19v18H.500zM.5 11.500h12.500V0M7 0v11" /></ViewButton>
        <Push $by={8} />
        <ZoomStep aria-label="缩小"><svg width="12" height="12" viewBox="0 0 12 12" stroke="#262626"><path d="M0 6.500h12" /></svg></ZoomStep>
        <Zoom type="range" aria-label="显示比例" min="10" max="190" defaultValue="102" />
        <ZoomStep aria-label="放大"><svg width="12" height="12" viewBox="0 0 12 12" stroke="#262626"><path d="M0 6.500h12M6.500 0v12" /></svg></ZoomStep>
        <Percent>100%</Percent>
        <Watermark>CSDN @工控老马</Watermark>
      </StatusBar>

      <Meter width="17" height="89" viewBox="0 0 17 89">
        <path d="M0 0h12q5 1 5 6v76q0 5-5 7H0z" fill="#4b4f60" />
        {Array.from({ length: 12 }, (_, i) => <path key={i} d={`M4 ${11 + i * 3}h6v1.500H4z`} fill="#2c2f3a" />)}
        {Array.from({ length: 10 }, (_, i) => <path key={i} d={`M3 ${49 + i * 3}h6v1.800H3z`} fill={["#b9d45f", "#a5d46a", "#93d477", "#84d485", "#79d394", "#70d3a4", "#68d2b2", "#62d0bf", "#5dcfcb", "#59cdd5"][i]} />)}
      </Meter>
    </Window>
  );
}
